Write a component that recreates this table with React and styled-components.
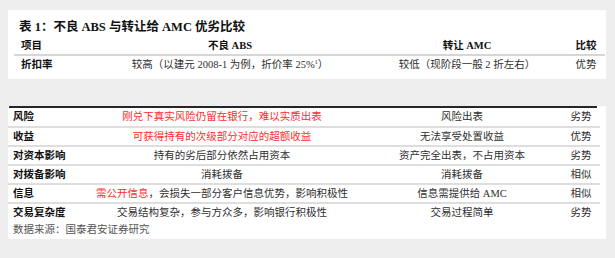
import React from "react";
import styled, { createGlobalStyle } from "styled-components";

const Global = createGlobalStyle`
  html, body { margin: 0; padding: 0; background: #eeeeee; }
  body { font-family: "Liberation Serif", "Noto Sans CJK SC", serif; }
`;

const Page = styled.div`
  width: 615px;
  height: 258px;
  background: #eeeeee;
  box-sizing: border-box;
  padding: 10px 0 0 8px;
  display: flex;
  flex-direction: column;
  font-family: "Liberation Serif", "Noto Sans CJK SC", serif;
  font-size: 10.5px;
  color: #2a2a2a;
`;

const TopCard = styled.section`
  width: 598px;
  background: #ffffff;
  box-sizing: border-box;
  padding: 8px 1px 5px 6px;
`;

const Title = styled.h1`
  margin: 0 0 2px 5px;
  font-size: 12.5px;
  line-height: 18px;
  font-weight: 700;
  color: #111;
`;

const TopRow = styled.div`
  display: grid;
  grid-template-columns: 79px 274px 200px 38px;
  align-items: center;
  height: ${(p) => (p.$head ? "16px" : "18px")};
  border-bottom: ${(p) => (p.$head ? "2px solid #d6d6d6" : "none")};
`;

const Cell = styled.div`
  text-align: ${(p) => (p.$label ? "left" : "center")};
  padding-left: ${(p) => (p.$label ? p.$pad || "7px" : "0")};
  font-weight: ${(p) => (p.$bold ? 700 : 400)};
  color: ${(p) => (p.$bold ? "#111" : "#2f2f2f")};
  white-space: nowrap;
  line-height: 14px;
`;

const Red = styled.span`
  color: #ff2b2b;
`;

const Sup = styled.sup`
  font-size: 6px;
  line-height: 0;
`;

const BottomCard = styled.section`
  margin-top: 27px;
  width: 598px;
  background: #ffffff;
  box-sizing: border-box;
  padding: 0 6px 0 0;
`;

const Rule = styled.div`
  height: 2px;
  margin: 0 3px 0 1px;
  background: #262626;
`;

const Row = styled.div`
  display: grid;
  grid-template-columns: 74px 280px 200px 38px;
  align-items: center;
  height: ${(p) => (p.$first ? "18px" : "17px")};
  border-bottom: ${(p) => (p.$last ? "none" : "2px solid #dedede")};
`;

const Source = styled.div`
  height: 18px;
  line-height: 18px;
  padding-left: 5px;
  color: #555;
`;

const rows = [
  {
    label: "风险",
    a: <Red>刚兑下真实风险仍留在银行，难以实质出表</Red>,
    b: "风险出表",
    c: "劣势",
  },
  {
    label: "收益",
    a: <Red>可获得持有的次级部分对应的超额收益</Red>,
    b: "无法享受处置收益",
    c: "优势",
  },
  {
    label: "对资本影响",
    a: "持有的劣后部分依然占用资本",
    b: "资产完全出表，不占用资本",
    c: "劣势",
  },
  { label: "对拨备影响", a: "消耗拨备", b: "消耗拨备", c: "相似" },
  {
    label: "信息",
    a: (
      <>
        <Red>需公开信息</Red>，会损失一部分客户信息优势，影响积极性
      </>
    ),
    b: "信息需提供给 AMC",
    c: "相似",
  },
  {
    label: "交易复杂度",
    a: "交易结构复杂，参与方众多，影响银行积极性",
    b: "交易过程简单",
    c: "劣势",
  },
];

export default function App() {
  return (
    <>
      <Global />
      <Page>
        <TopCard>
          <Title>表 1：不良 ABS 与转让给 AMC 优劣比较</Title>
          <TopRow $head>
            <Cell $label $bold>项目</Cell>
            <Cell $bold>不良 ABS</Cell>
            <Cell $bold>转让 AMC</Cell>
            <Cell $bold>比较</Cell>
          </TopRow>
          <TopRow>
            <Cell $label $bold>折扣率</Cell>
            <Cell>
              较高（以建元 2008-1 为例，折价率 25%<Sup>1</Sup>）
            </Cell>
            <Cell>较低（现阶段一般 2 折左右）</Cell>
            <Cell>优势</Cell>
          </TopRow>
        </TopCard>
        <BottomCard>
          <Rule />
          {rows.map((r, i) => (
            <Row key={r.label} $first={i === 0} $last={i === rows.length - 1}>
              <Cell $label $bold $pad="5px">{r.label}</Cell>
              <Cell>{r.a}</Cell>
              <Cell>{r.b}</Cell>
              <Cell>{r.c}</Cell>
            </Row>
          ))}
          <Source>数据来源：国泰君安证券研究</Source>
        </BottomCard>
      </Page>
    </>
  );
}
